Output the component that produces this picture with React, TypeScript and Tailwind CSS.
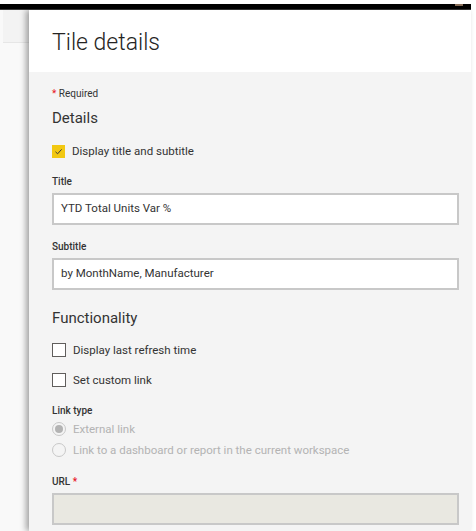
import React from "react";

const font = { fontFamily: 'Roboto, "Open Sans", Arial, sans-serif' };

function CheckRow({ checked, label, mt }: { checked?: boolean; label: string; mt: string }) {
  return (
    <div className={`flex items-center h-[14px] ${mt}`}>
      {checked ? (
        <div className="w-[13px] h-[13px] bg-[#f2c811] flex items-center justify-center">
          <svg width="9" height="9" viewBox="0 0 9 9">
            <path d="M1.5 4.8 L3.6 6.8 L7.6 2.4" fill="none" stroke="#3b3a39" strokeWidth="1" />
          </svg>
        </div>
      ) : (
        <div className="w-[14px] h-[14px] border border-[#605e5c] bg-white" />
      )}
      <span className="ml-[7px] text-[11.5px] leading-[14px] text-[#333333]">{label}</span>
    </div>
  );
}

function Radio({ checked, label, mt }: { checked?: boolean; label: string; mt: string }) {
  return (
    <div className={`flex items-center h-[16px] ${mt}`}>
      <div className="w-[14px] h-[14px] rounded-full border border-[#c8c8c8] flex items-center justify-center">
        {checked && <div className="w-[8px] h-[8px] rounded-full bg-[#b3b3b3]" />}
      </div>
      <span className="ml-[7px] text-[11.5px] leading-[16px] text-[#b3b3b3]">{label}</span>
    </div>
  );
}

export default function App() {
  return (
    <div className="w-[476px] h-[531px] bg-white overflow-hidden relative flex flex-col" style={font}>
      <div className="h-[4px] bg-white shrink-0" />
      <div className="h-[6px] w-[471px] bg-black shrink-0 border-b border-[#3a3a3a]" />
      <div className="absolute top-[4px] left-[455px] w-[8px] h-[2px] bg-[#8a6f5a]" />
      <div className="flex flex-1 min-h-0">
        <div className="w-[29px] shrink-0 flex flex-col bg-[#f9f9f9]">
          <div className="h-[33px] bg-[#f3f3f3] border-b border-[#e6e6e6] ml-[3px]" />
          <div className="flex-1" />
        </div>
        <div className="w-[442px] shrink-0 flex flex-col shadow-[-3px_0_6px_rgba(0,0,0,0.35)] relative">
          <div className="h-[62px] bg-white pl-[23px] pt-[18px] shrink-0">
            <div className="text-[23px] leading-[30px] font-light text-[#252423]">Tile details</div>
          </div>
          <div className="flex-1 bg-[#f4f4f4] pl-[23px] pr-[12px] flex flex-col">
            <div className="mt-[15px] h-[14px] text-[10px] leading-[14px] text-[#333333]">
              <span className="text-[#e81123]">*</span> Required
            </div>
            <div className="mt-[7px] h-[20px] text-[15px] leading-[20px] text-[#333333]">Details</div>
            <CheckRow checked label="Display title and subtitle" mt="mt-[16px]" />
            <div className="mt-[17px] h-[14px] text-[10px] leading-[14px] font-medium text-[#333333]">Title</div>
            <div className="mt-[4px] h-[32px] border-2 border-[#c8c8c8] bg-white flex items-center pl-[7px] text-[11.5px] text-[#333333]">
              YTD Total Units Var %
            </div>
            <div className="mt-[15px] h-[14px] text-[10px] leading-[14px] font-medium text-[#333333]">Subtitle</div>
            <div className="mt-[4px] h-[32px] border-2 border-[#c8c8c8] bg-white flex items-center pl-[7px] text-[11.5px] text-[#333333]">
              by MonthName, Manufacturer
            </div>
            <div className="mt-[18px] h-[20px] text-[15px] leading-[20px] text-[#333333]">Functionality</div>
            <CheckRow label="Display last refresh time" mt="mt-[15px]" />
            <CheckRow label="Set custom link" mt="mt-[16px]" />
            <div className="mt-[17px] h-[14px] text-[10px] leading-[14px] font-medium text-[#333333]">Link type</div>
            <Radio checked label="External link" mt="mt-[3px]" />
            <Radio label="Link to a dashboard or report in the current workspace" mt="mt-[5px]" />
            <div className="mt-[17px] h-[14px] text-[10px] leading-[14px] font-medium text-[#333333]">
              URL <span className="text-[#e81123]">*</span>
            </div>
            <div className="mt-[4px] h-[32px] shrink-0 border-2 border-[#c8c8c8] bg-[#e9e8e1]" />
          </div>
        </div>
        <div className="flex-1 bg-white" />
      </div>
    </div>
  );
}
